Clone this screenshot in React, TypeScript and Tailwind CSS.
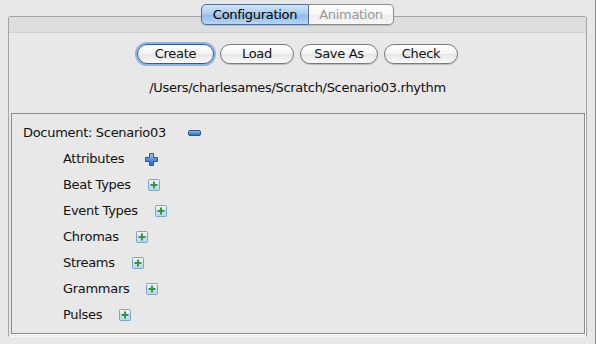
import React from 'react';

const MinusIcon = () => (
  <svg width="13" height="7" viewBox="0 0 13 7" className="block">
    <defs>
      <linearGradient id="mg" x1="0" y1="0" x2="0" y2="1">
        <stop offset="0" stopColor="#a9ccf2" />
        <stop offset="0.5" stopColor="#4f8fdb" />
        <stop offset="1" stopColor="#2f6fc4" />
      </linearGradient>
    </defs>
    <rect x="0.5" y="0.5" width="12" height="5" rx="1.5" fill="url(#mg)" stroke="#2a5590" />
  </svg>
);

const BluePlus = () => (
  <svg width="13" height="13" viewBox="0 0 13 13" className="block ml-[4px]">
    <defs>
      <linearGradient id="bp" x1="0" y1="0" x2="0" y2="1">
        <stop offset="0" stopColor="#a9ccf2" />
        <stop offset="0.5" stopColor="#4f8fdb" />
        <stop offset="1" stopColor="#2f6fc4" />
      </linearGradient>
    </defs>
    <path
      d="M4.5 0.5h4v4h4v4h-4v4h-4v-4h-4v-4h4z"
      fill="url(#bp)"
      stroke="#2a5590"
      strokeLinejoin="round"
    />
  </svg>
);

const GreenPlusBox = () => (
  <svg width="12" height="12" viewBox="0 0 12 12" className="block">
    <defs>
      <linearGradient id="gb" x1="0" y1="0" x2="0" y2="1">
        <stop offset="0" stopColor="#eef5fb" />
        <stop offset="1" stopColor="#b9d3e8" />
      </linearGradient>
    </defs>
    <rect x="0.5" y="0.5" width="11" height="11" rx="1" fill="url(#gb)" stroke="#7fa3c4" />
    <rect x="5" y="2.5" width="2" height="7" fill="#2f9a3e" />
    <rect x="2.5" y="5" width="7" height="2" fill="#2f9a3e" />
  </svg>
);

const buttons = [
  { label: 'Create', w: 'w-[77px]', focused: true },
  { label: 'Load', w: 'w-[74px]', focused: false },
  { label: 'Save As', w: 'w-[78px]', focused: false },
  { label: 'Check', w: 'w-[74px]', focused: false },
];

const children = [
  { label: 'Attributes', blue: true },
  { label: 'Beat Types' },
  { label: 'Event Types' },
  { label: 'Chromas' },
  { label: 'Streams' },
  { label: 'Grammars' },
  { label: 'Pulses' },
];

export default function App() {
  return (
    <div className="w-[596px] h-[344px] bg-[#e8e8e8] border-r border-[#8e8e8e] font-['DejaVu_Sans',sans-serif] text-[13px] tracking-[-0.3px] text-[#111] overflow-hidden">
      <div className="pl-[8px] pt-[4px]">
        {/* segmented tabs */}
        <div className="relative z-10 flex justify-center w-[579px] h-[21px]">
          <div className="flex h-[21px] rounded-[5px] shadow-[0_1px_1px_rgba(0,0,0,0.15)]">
            <div className="w-[108px] h-full flex items-center justify-center rounded-l-[5px] border border-[#4f6d96] bg-[linear-gradient(#d2e4f8,#a6c9f0_50%,#8cb9ec_51%,#b8d6f6)] text-black">
              Configuration
            </div>
            <div className="w-[85px] h-full flex items-center justify-center rounded-r-[5px] border border-l-0 border-[#8c8c8c] bg-[linear-gradient(#ffffff,#f6f6f6_50%,#ececec_51%,#f7f7f7)] text-[#9a9a9a]">
              Animation
            </div>
          </div>
        </div>

        {/* tab panel */}
        <div className="-mt-[9px] w-[579px] h-[321px] border border-[#a3a3a3] border-b-[#f5f5f5] rounded-t-[3px] flex flex-col">
          <div className="h-[16px] bg-[#dddddd] border-b border-[#d4d4d4]" />

          <div className="mt-[11px] flex justify-center gap-[6px]">
            {buttons.map((b) => (
              <div
                key={b.label}
                className={`${b.w} h-[20px] flex items-center justify-center rounded-full bg-[linear-gradient(#ffffff,#f4f4f4_50%,#e6e6e6_51%,#fafafa)] ${
                  b.focused
                    ? 'border border-[#39598a] shadow-[0_0_0_2px_#8db3e4]'
                    : 'border border-[#7b7b7b] shadow-[0_1px_1px_rgba(0,0,0,0.2)]'
                }`}
              >
                {b.label}
              </div>
            ))}
          </div>

          <div className="mt-[16px] h-[16px] leading-[16px] text-center">
            /Users/charlesames/Scratch/Scenario03.rhythm
          </div>

          <div className="mt-[17px] ml-[2px] w-[574px] h-[221px] border border-[#8a8a8a] shadow-[1px_1px_0_#ffffff] pt-[6px] pl-[11px]">
            <div className="h-[26px] flex items-center gap-[22px]">
              <span>Document: Scenario03</span>
              <MinusIcon />
            </div>
            <div className="pl-[40px]">
              {children.map((c) => (
                <div key={c.label} className="h-[26px] flex items-center gap-[17px]">
                  <span>{c.label}</span>
                  {c.blue ? <BluePlus /> : <GreenPlusBox />}
                </div>
              ))}
            </div>
          </div>
        </div>
      </div>
    </div>
  );
}
